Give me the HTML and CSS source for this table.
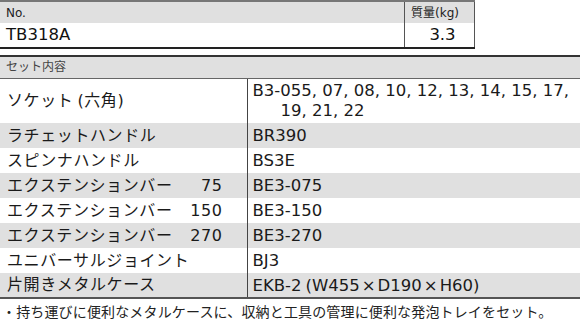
FILE: index.html
```html
<!DOCTYPE html>
<html lang="ja">
<head>
<meta charset="utf-8">
<link rel="stylesheet" href="styles.css">
</head>
<body>
<div class="page">
  <table class="spec">
    <tr class="head">
      <td class="c-no">No.</td>
      <td class="c-wt">質量(kg)</td>
    </tr>
    <tr class="val">
      <td class="c-no">TB318A</td>
      <td class="c-wt center">3.3</td>
    </tr>
  </table>

  <table class="set">
    <tr class="head">
      <td colspan="2">セット内容</td>
    </tr>
    <tr class="tall">
      <td class="name">ソケット<span class="paren">(</span>六角)</td>
      <td class="code"><span class="wrap">B3-055, 07, 08, 10, 12, 13, 14, 15, 17,<br><span class="ind">19, 21, 22</span></span></td>
    </tr>
    <tr class="shade">
      <td class="name">ラチェットハンドル</td>
      <td class="code">BR390</td>
    </tr>
    <tr>
      <td class="name">スピンナハンドル</td>
      <td class="code">BS3E</td>
    </tr>
    <tr class="shade">
      <td class="name"><div class="split"><span>エクステンションバー</span><span>75</span></div></td>
      <td class="code">BE3-075</td>
    </tr>
    <tr>
      <td class="name"><div class="split"><span>エクステンションバー</span><span>150</span></div></td>
      <td class="code">BE3-150</td>
    </tr>
    <tr class="shade">
      <td class="name"><div class="split"><span>エクステンションバー</span><span>270</span></div></td>
      <td class="code">BE3-270</td>
    </tr>
    <tr>
      <td class="name">ユニバーサルジョイント</td>
      <td class="code">BJ3</td>
    </tr>
    <tr class="shade">
      <td class="name">片開きメタルケース</td>
      <td class="code">EKB-2<span class="paren">(</span>W455<span class="x">×</span>D190<span class="x">×</span>H60)</td>
    </tr>
  </table>

  <p class="note">・持ち運びに便利なメタルケースに、収納と工具の管理に便利な発泡トレイをセット。</p>
</div>
</body>
</html>
```

FILE: styles.css
```css
* { box-sizing: border-box; }
html, body { margin: 0; padding: 0; background: #fff; }
body {
  font-family: "DejaVu Sans", "Noto Sans CJK JP", sans-serif;
  color: #1a1a1a;
  width: 580px;
  height: 324px;
  overflow: hidden;
}
table { border-collapse: collapse; }
td { padding: 0; }

.spec {
  width: 475px;
  border-top: 2px solid #777;
  border-bottom: 2px solid #222;
}
.spec .head td {
  background: #e0e0e0;
  height: 22px;
  font-size: 12px;
  line-height: 20px;
  padding-left: 6px;
  color: #222;
}
.spec .val td {
  height: 25px;
  font-size: 16.5px;
  line-height: 24px;
  padding-left: 6px;
  color: #111;
}
.spec .c-wt {
  width: 70px;
  border-left: 1px solid #555;
  border-right: 1px solid #555;
}
.spec .head .c-wt { padding-left: 6px; }
.spec .center { text-align: center; padding-left: 0; }

.set {
  width: 580px;
  margin-top: 6px;
  border-top: 2px solid #333;
  border-bottom: 2px solid #555;
}
.set .head td {
  background: #e0e0e0;
  height: 22px;
  font-size: 12px;
  line-height: 20px;
  padding-left: 6px;
  color: #444;
  border-bottom: 1px solid #666;
}
.set td.name {
  width: 247px;
  height: 25px;
  padding: 0 24px 0 7px;
  font-size: 16px;
  letter-spacing: 0.6px;
  line-height: 24px;
  border-right: 1px solid #444;
  white-space: nowrap;
}
.set td.code {
  padding-left: 5px;
  font-size: 16.5px;
  line-height: 21px;
  white-space: nowrap;
}
.set tr.tall td { height: 45px; }
.set tr.shade td { background: #e0e0e0; }
.wrap { display: block; line-height: 20px; }
.ind { padding-left: 28px; }
.split { display: flex; justify-content: space-between; }
.paren { margin-left: 4px; }
.x { margin: 0 2px; }

.note {
  margin: 3px 0 0 0;
  font-size: 14px;
  letter-spacing: 0.15px;
  line-height: 20px;
  color: #222;
  padding-left: 2px;
}
```
